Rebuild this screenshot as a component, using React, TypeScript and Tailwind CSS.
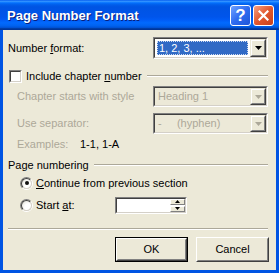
import React from 'react'

const body = "font-['Tahoma','Liberation_Sans',Arial,sans-serif] text-[11px] leading-none"

function Sunken({ className = '', children }: { className?: string; children?: React.ReactNode }) {
  return (
    <div className={`border border-t-[#808080] border-l-[#808080] border-b-white border-r-white ${className}`}>
      <div className="h-full w-full border border-t-[#404040] border-l-[#404040] border-b-[#D4D0C8] border-r-[#D4D0C8] flex">
        {children}
      </div>
    </div>
  )
}

function Arrow({ up = false, color = '#000', small = false }: { up?: boolean; color?: string; small?: boolean }) {
  const w = small ? 5 : 7
  const h = small ? 3 : 4
  return (
    <svg width={w} height={h} viewBox={`0 0 ${w} ${h}`}>
      <path d={up ? `M${w / 2} 0 L${w} ${h} L0 ${h} Z` : `M0 0 L${w} 0 L${w / 2} ${h} Z`} fill={color} />
    </svg>
  )
}

function DropButton({ disabled = false }: { disabled?: boolean }) {
  return (
    <div className="w-[16px] h-full bg-[#ECE9D8] border border-t-[#ECE9D8] border-l-[#ECE9D8] border-b-[#404040] border-r-[#404040]">
      <div className="h-full w-full border border-t-white border-l-white border-b-[#808080] border-r-[#808080] flex items-center justify-center">
        <Arrow color={disabled ? '#ACA899' : '#000'} />
      </div>
    </div>
  )
}

function Combo({ value, selected = false, disabled = false }: { value: string; selected?: boolean; disabled?: boolean }) {
  return (
    <Sunken className={`w-[115px] h-full ${disabled ? 'bg-[#ECE9D8]' : 'bg-white'}`}>
      <div className="flex-1 flex items-center p-[2px]">
        {selected ? (
          <div className="h-full flex-1 bg-[#316AC5] text-white flex items-center pl-[2px] outline outline-1 outline-dotted outline-[#CEDBF0] -outline-offset-1">
            {value}
          </div>
        ) : (
          <span className={`pl-[1px] ${disabled ? 'text-[#ACA899]' : ''}`}>{value}</span>
        )}
      </div>
      <DropButton disabled={disabled} />
    </Sunken>
  )
}

function Etched({ className = '' }: { className?: string }) {
  return <div className={`h-[2px] border-t border-t-[#ACA899] border-b border-b-white ${className}`} />
}

function Radio({ checked = false }: { checked?: boolean }) {
  return (
    <div className="w-[13px] h-[13px] rounded-full border border-t-[#808080] border-l-[#808080] border-b-white border-r-white">
      <div className="w-full h-full rounded-full border border-t-[#404040] border-l-[#404040] border-b-[#D4D0C8] border-r-[#D4D0C8] bg-[radial-gradient(circle_at_70%_70%,#ffffff_40%,#dcdad0_100%)] flex items-center justify-center">
        {checked && <div className="w-[4px] h-[4px] rounded-full bg-[#111]" />}
      </div>
    </div>
  )
}

function TitleButton({ kind }: { kind: 'help' | 'close' }) {
  const bg =
    kind === 'help'
      ? 'bg-[linear-gradient(135deg,#6FA2FF_0%,#2E6BF0_50%,#1F55D8_100%)]'
      : 'bg-[linear-gradient(135deg,#F5A083_0%,#E2572D_50%,#C8401C_100%)]'
  return (
    <div className={`w-[21px] h-[21px] rounded-[3px] border border-white flex items-center justify-center ${bg}`}>
      {kind === 'help' ? (
        <span className="text-white font-bold text-[17px] leading-none font-['Liberation_Sans',Arial,sans-serif]">?</span>
      ) : (
        <svg width="11" height="11" viewBox="0 0 11 11">
          <path d="M1.5 1.5 L9.5 9.5 M9.5 1.5 L1.5 9.5" stroke="#fff" strokeWidth="2.2" strokeLinecap="square" />
        </svg>
      )}
    </div>
  )
}

function Button({ label, isDefault = false }: { label: string; isDefault?: boolean }) {
  return (
    <div className={`w-[73px] h-[25px] ${isDefault ? 'border border-black' : ''}`}>
      <div className="w-full h-full bg-[#ECE9D8] border border-t-white border-l-white border-b-[#404040] border-r-[#404040]">
        <div className="w-full h-full border border-t-[#ECE9D8] border-l-[#ECE9D8] border-b-[#808080] border-r-[#808080] flex items-center justify-center">
          {label}
        </div>
      </div>
    </div>
  )
}

export default function App() {
  return (
    <div className={`w-[279px] h-[273px] flex flex-col bg-[#0054E3] ${body}`}>
      {/* title bar */}
      <div className="h-[30px] flex items-center pl-[7px] pr-[5px] bg-[linear-gradient(180deg,#0058ee_0%,#3593ff_4%,#288eff_6%,#127dff_8%,#036ffc_10%,#0262ee_14%,#0057e5_20%,#0054e3_24%,#0055eb_56%,#005bf5_66%,#026afe_76%,#0062ef_86%,#0052d6_92%,#0040ab_94%,#003092_100%)]">
        <span className="flex-1 text-white font-bold text-[13px] font-['Trebuchet_MS','Liberation_Sans',Arial,sans-serif] [text-shadow:1px_1px_0_#0A1E7A]">
          Page Number Format
        </span>
        <div className="flex gap-[2px]">
          <TitleButton kind="help" />
          <TitleButton kind="close" />
        </div>
      </div>

      {/* client area */}
      <div className="flex-1 mx-[3px] mb-[3px] bg-[#ECE9D8] pl-[5px] pr-[8px] flex flex-col text-black">
        <div className="mt-[7px] h-[22px] flex items-center justify-between">
          <span>
            Number <u>f</u>ormat:
          </span>
          <Combo value="1, 2, 3, ..." selected />
        </div>

        <div className="mt-[9px] h-[16px] flex items-center">
          <div className="w-[13px] h-[13px] ml-[1px] bg-white border border-t-[#808080] border-l-[#808080] border-b-white border-r-white">
            <div className="w-full h-full border border-t-[#404040] border-l-[#404040] border-b-[#D4D0C8] border-r-[#D4D0C8]" />
          </div>
          <span className="ml-[4px]">
            Include chapter <u>n</u>umber
          </span>
          <Etched className="flex-1 ml-[5px]" />
        </div>

        <div className="mt-[2px] h-[21px] flex items-center justify-between pl-[9px] text-[#ACA899]">
          <span>Chapter starts with style</span>
          <Combo value="Heading 1" disabled />
        </div>

        <div className="mt-[6px] h-[21px] flex items-center justify-between pl-[9px] text-[#ACA899]">
          <span>Use separator:</span>
          <Combo value={'-\u00a0\u00a0\u00a0\u00a0\u00a0(hyphen)'} disabled />
        </div>

        <div className="mt-[2px] h-[16px] flex items-center pl-[9px]">
          <span className="w-[63px] text-[#ACA899]">Examples:</span>
          <span>1-1, 1-A</span>
        </div>

        <div className="mt-[5px] h-[16px] flex items-center">
          <span>Page numbering</span>
          <Etched className="flex-1 ml-[5px]" />
        </div>

        <div className="mt-[2px] h-[16px] flex items-center pl-[12px]">
          <Radio checked />
          <span className="ml-[3px]">
            <u>C</u>ontinue from previous section
          </span>
        </div>

        <div className="mt-[5px] h-[18px] flex items-center pl-[12px]">
          <Radio />
          <span className="ml-[3px] w-[79px]">
            Start <u>a</u>t:
          </span>
          <Sunken className="w-[72px] h-[17px] bg-white">
            <div className="flex-1" />
            <div className="w-[15px] flex flex-col gap-[1px] bg-white">
              {[true, false].map((up) => (
                <div key={String(up)} className="flex-1 bg-[#ECE9D8] border border-t-white border-l-white border-b-[#808080] border-r-[#808080] flex items-center justify-center">
                  <Arrow up={up} small />
                </div>
              ))}
            </div>
          </Sunken>
        </div>

        <Etched className="mt-[14px]" />

        <div className="mt-[7px] flex justify-end gap-[8px] -mr-[1px]">
          <Button label="OK" isDefault />
          <Button label="Cancel" />
        </div>
      </div>
    </div>
  )
}
